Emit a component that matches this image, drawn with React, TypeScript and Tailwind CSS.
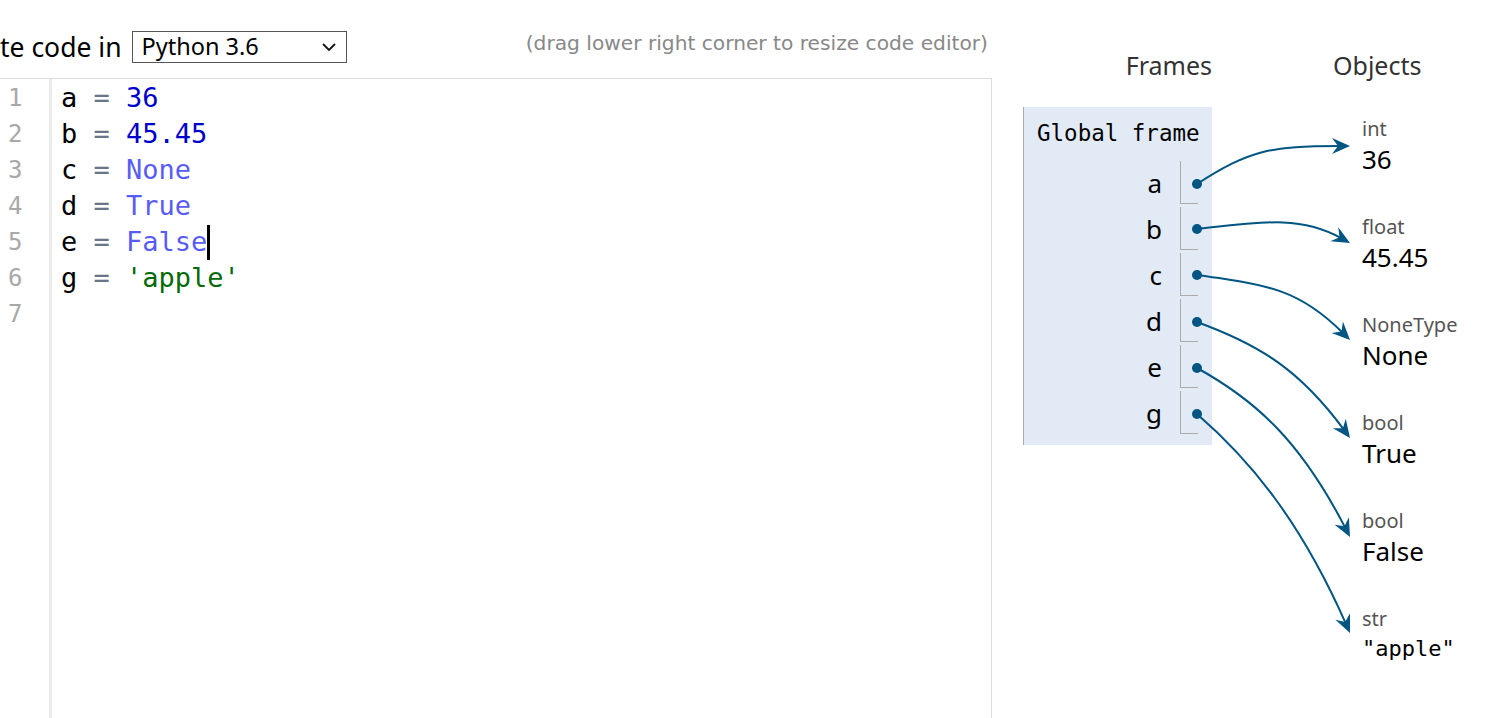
import React from "react";

const ui = { fontFamily: '"Noto Sans", "Open Sans", sans-serif' };
const mono = { fontFamily: '"DejaVu Sans Mono", "Liberation Mono", monospace' };
const drag = { fontFamily: '"DejaVu Sans", Verdana, sans-serif' };

type Tok = { t: string; c: string };

const NUM = "text-[#0000cd]";
const LIT = "text-[#585cf6]";
const STR = "text-[#036a07]";

const lines: { name: string; tok: Tok }[] = [
  { name: "a", tok: { t: "36", c: NUM } },
  { name: "b", tok: { t: "45.45", c: NUM } },
  { name: "c", tok: { t: "None", c: LIT } },
  { name: "d", tok: { t: "True", c: LIT } },
  { name: "e", tok: { t: "False", c: LIT } },
  { name: "g", tok: { t: "'apple'", c: STR } },
];

const objects = [
  { type: "int", value: "36" },
  { type: "float", value: "45.45" },
  { type: "NoneType", value: "None" },
  { type: "bool", value: "True" },
  { type: "bool", value: "False" },
  { type: "str", value: '"apple"', mono: true },
];

// pointer arrows, page coordinates
const arrows = [
  { d: [1197, 184, 1250, 150, 1270, 146, 1350, 146] },
  { d: [1197, 229, 1260, 222, 1300, 215, 1350, 243] },
  { d: [1197, 275, 1270, 285, 1300, 290, 1350, 340] },
  { d: [1197, 322, 1260, 345, 1300, 370, 1350, 438] },
  { d: [1197, 368, 1255, 400, 1300, 440, 1350, 537] },
  { d: [1197, 414, 1250, 460, 1300, 520, 1350, 633] },
];

function Arrows() {
  return (
    <svg
      className="pointer-events-none absolute left-0 top-0"
      width={1489}
      height={718}
    >
      {arrows.map(({ d }, i) => {
        const [x0, y0, c1x, c1y, c2x, c2y, x1, y1] = d;
        const ang = (Math.atan2(y1 - c2y, x1 - c2x) * 180) / Math.PI;
        const ex = x1 - 10 * Math.cos((ang * Math.PI) / 180);
        const ey = y1 - 10 * Math.sin((ang * Math.PI) / 180);
        return (
          <g key={i}>
            <path
              d={`M${x0},${y0} C${c1x},${c1y} ${c2x},${c2y} ${ex},${ey}`}
              fill="none"
              stroke="#005583"
              strokeWidth={2}
            />
            <path
              d="M0,0 L-18,-8 L-12,0 L-18,8 Z"
              fill="#005583"
              transform={`translate(${x1},${y1}) rotate(${ang})`}
            />
            <circle cx={x0} cy={y0} r={5} fill="#005583" />
          </g>
        );
      })}
    </svg>
  );
}

export default function App() {
  return (
    <div className="relative flex h-[718px] w-[1489px] overflow-hidden bg-white">
      {/* Editor side */}
      <div className="flex w-[992px] shrink-0 flex-col">
        <div className="flex h-[78px] items-start justify-between pr-[4px]">
          <div className="mt-[31px] flex items-center">
            <span className="text-[26.5px] leading-[32px] text-black" style={ui}>
              te code in
            </span>
            <div
              className="ml-[10px] flex h-[32px] w-[215px] items-center justify-between border border-[#555] bg-white pl-[9px] pr-[9px]"
              style={ui}
            >
              <span className="text-[23.5px] leading-none text-black">Python 3.6</span>
              <svg width="16" height="10" viewBox="0 0 16 10">
                <polyline
                  points="2,2 8,8 14,2"
                  fill="none"
                  stroke="#111"
                  strokeWidth={1.8}
                />
              </svg>
            </div>
          </div>
          <span
            className="mt-[30px] text-[20.2px] leading-[26px] text-[#888]"
            style={drag}
          >
            (drag lower right corner to resize code editor)
          </span>
        </div>

        <div className="flex flex-1 border-t border-r border-[#ddd]">
          <div
            className="w-[52px] shrink-0 border-r-[3px] border-[#ebebeb] pl-[8px] pt-[1px] text-[24px] leading-[36px] text-[#a8a8a8]"
            style={mono}
          >
            {[1, 2, 3, 4, 5, 6, 7].map((n) => (
              <div key={n}>{n}</div>
            ))}
          </div>
          <div
            className="flex-1 whitespace-pre pl-[9px] pt-[1px] text-[27px] leading-[36px] text-black"
            style={mono}
          >
            {lines.map((l, i) => (
              <div key={l.name} className="flex items-center">
                <span>{l.name}</span>
                <span className="text-[#687687]"> = </span>
                <span className={l.tok.c}>{l.tok.t}</span>
                {i === 4 && (
                  <span className="inline-block h-[35px] w-[3px] bg-black" />
                )}
              </div>
            ))}
            <div>&nbsp;</div>
          </div>
        </div>
      </div>

      {/* Visualizer side */}
      <div className="ml-[31px] flex">
        <div className="w-[189px] pt-[49px]">
          <div
            className="h-[32px] text-right text-[25px] leading-[32px] text-[#333]"
            style={ui}
          >
            Frames
          </div>
          <div className="mt-[26px] h-[338px] border-l border-[#aaa] bg-[#e2eaf5]">
            <div
              className="whitespace-nowrap pl-[13px] pt-[13px] text-[22.5px] leading-[26px] text-black"
              style={mono}
            >
              Global frame
            </div>
            <div className="mt-[15px] flex flex-col gap-[3px] pr-[14px]">
              {lines.map((l) => (
                <div key={l.name} className="flex h-[43px] items-center justify-end">
                  <span
                    className="mr-[18px] text-[26px] leading-none text-black"
                    style={ui}
                  >
                    {l.name}
                  </span>
                  <div className="h-full w-[18px] border-b border-l border-[#aaa]" />
                </div>
              ))}
            </div>
          </div>
        </div>

        <div className="ml-[121px] pt-[49px]">
          <div className="h-[32px] text-[25px] leading-[32px] text-[#333]" style={ui}>
            Objects
          </div>
          <div className="mt-[36px] pl-[29px]">
            {objects.map((o, i) => (
              <div key={i} className="h-[98px]">
                <div className="text-[20px] leading-[24px] text-[#555]" style={ui}>
                  {o.type}
                </div>
                <div
                  className={
                    o.mono
                      ? "mt-[2px] text-[22px] leading-[32px] text-black"
                      : "mt-[2px] text-[26px] leading-[32px] text-black"
                  }
                  style={o.mono ? mono : ui}
                >
                  {o.value}
                </div>
              </div>
            ))}
          </div>
        </div>
      </div>

      <Arrows />
    </div>
  );
}
